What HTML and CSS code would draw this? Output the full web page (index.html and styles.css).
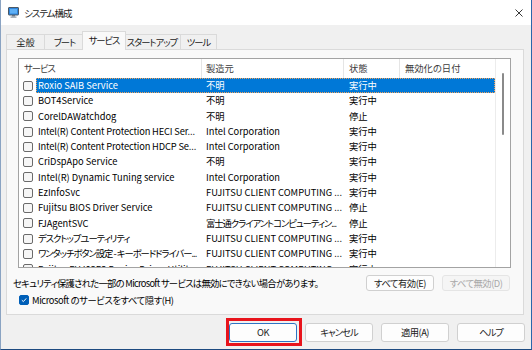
FILE: index.html
```html
<!DOCTYPE html>
<html lang="ja">
<head>
    <meta charset="UTF-8">
    <title>システム構成</title>
    <link rel="stylesheet" href="styles.css">
</head>
<body>
    <div class="window">
        <div class="titlebar">
            <svg class="title-icon" viewBox="0 0 11 11">
                <rect x="0.5" y="0.5" width="10" height="7.5" rx="0.5" fill="#2f86de" stroke="#4a5866"/>
                <rect x="2" y="2" width="7" height="4.5" fill="#5fb0f5"/>
                <rect x="4" y="8" width="3" height="1.5" fill="#6b7580"/>
                <rect x="2.5" y="9.5" width="6" height="1.2" fill="#8a949e"/>
            </svg>
            <span class="title kana">システム構成</span>
            <svg class="close" viewBox="0 0 8 8">
                <path d="M0.5 0.5 L7.5 7.5 M7.5 0.5 L0.5 7.5" stroke="#222" stroke-width="0.9" fill="none"/>
            </svg>
        </div>

        <div class="tabs">
            <div class="tab t-general">全般</div>
            <div class="tab t-boot kana">ブート</div>
            <div class="tab t-services kana active">サービス</div>
            <div class="tab t-startup kana">スタートアップ</div>
            <div class="tab t-tools kana last">ツール</div>
        </div>

        <div class="panel">
            <div class="list">
                <div class="table">
                    <div class="header">
                        <div class="hcol h-name kana">サービス</div>
                        <div class="hcol h-maker">製造元</div>
                        <div class="hcol h-state">状態</div>
                        <div class="hcol h-date">無効化の日付</div>
                    </div>

                    <div class="row selected">
                        <div class="c-check"><span class="box"></span></div>
                        <div class="cells">
                            <div class="c-name">Roxio SAIB Service</div>
                            <div class="c-maker">不明</div>
                            <div class="c-state">実行中</div>
                            <div class="c-date"></div>
                        </div>
                    </div>
                    <div class="row">
                        <div class="c-check"><span class="box"></span></div>
                        <div class="cells">
                            <div class="c-name">BOT4Service</div>
                            <div class="c-maker">不明</div>
                            <div class="c-state">実行中</div>
                            <div class="c-date"></div>
                        </div>
                    </div>
                    <div class="row">
                        <div class="c-check"><span class="box"></span></div>
                        <div class="cells">
                            <div class="c-name">CorelDAWatchdog</div>
                            <div class="c-maker">不明</div>
                            <div class="c-state">停止</div>
                            <div class="c-date"></div>
                        </div>
                    </div>
                    <div class="row">
                        <div class="c-check"><span class="box"></span></div>
                        <div class="cells">
                            <div class="c-name tight">Intel(R) Content Protection HECI Ser...</div>
                            <div class="c-maker">Intel Corporation</div>
                            <div class="c-state">実行中</div>
                            <div class="c-date"></div>
                        </div>
                    </div>
                    <div class="row">
                        <div class="c-check"><span class="box"></span></div>
                        <div class="cells">
                            <div class="c-name tight">Intel(R) Content Protection HDCP Se...</div>
                            <div class="c-maker">Intel Corporation</div>
                            <div class="c-state">実行中</div>
                            <div class="c-date"></div>
                        </div>
                    </div>
                    <div class="row">
                        <div class="c-check"><span class="box"></span></div>
                        <div class="cells">
                            <div class="c-name">CriDspApo Service</div>
                            <div class="c-maker">不明</div>
                            <div class="c-state">実行中</div>
                            <div class="c-date"></div>
                        </div>
                    </div>
                    <div class="row">
                        <div class="c-check"><span class="box"></span></div>
                        <div class="cells">
                            <div class="c-name">Intel(R) Dynamic Tuning service</div>
                            <div class="c-maker">Intel Corporation</div>
                            <div class="c-state">実行中</div>
                            <div class="c-date"></div>
                        </div>
                    </div>
                    <div class="row">
                        <div class="c-check"><span class="box"></span></div>
                        <div class="cells">
                            <div class="c-name">EzInfoSvc</div>
                            <div class="c-maker">FUJITSU CLIENT COMPUTING ...</div>
                            <div class="c-state">実行中</div>
                            <div class="c-date"></div>
                        </div>
                    </div>
                    <div class="row">
                        <div class="c-check"><span class="box"></span></div>
                        <div class="cells">
                            <div class="c-name">Fujitsu BIOS Driver Service</div>
                            <div class="c-maker">FUJITSU CLIENT COMPUTING ...</div>
                            <div class="c-state">停止</div>
                            <div class="c-date"></div>
                        </div>
                    </div>
                    <div class="row">
                        <div class="c-check"><span class="box"></span></div>
                        <div class="cells">
                            <div class="c-name">FJAgentSVC</div>
                            <div class="c-maker kana">富士通クライアントコンピューティン...</div>
                            <div class="c-state">停止</div>
                            <div class="c-date"></div>
                        </div>
                    </div>
                    <div class="row">
                        <div class="c-check"><span class="box"></span></div>
                        <div class="cells">
                            <div class="c-name kana">デスクトップユーティリティ</div>
                            <div class="c-maker">FUJITSU CLIENT COMPUTING ...</div>
                            <div class="c-state">実行中</div>
                            <div class="c-date"></div>
                        </div>
                    </div>
                    <div class="row">
                        <div class="c-check"><span class="box"></span></div>
                        <div class="cells">
                            <div class="c-name kana">ワンタッチボタン設定 - キーボードドライバー...</div>
                            <div class="c-maker">FUJITSU CLIENT COMPUTING ...</div>
                            <div class="c-state">実行中</div>
                            <div class="c-date"></div>
                        </div>
                    </div>
                    <div class="row">
                        <div class="c-check"><span class="box"></span></div>
                        <div class="cells">
                            <div class="c-name">Fujitsu FUJ02E3 Device Driver Utility</div>
                            <div class="c-maker">FUJITSU CLIENT COMPUTING ...</div>
                            <div class="c-state">実行中</div>
                            <div class="c-date"></div>
                        </div>
                    </div>
                </div>
                <div class="vscroll">
                    <div class="thumb"></div>
                </div>
            </div>

            <div class="note">
                <span class="mixed">セキュリティ保護された一部の Microsoft サービスは無効にできない場合があります。</span>
                <div class="note-buttons">
                    <button class="btn">すべて有効(E)</button>
                    <button class="btn" disabled>すべて無効(D)</button>
                </div>
            </div>

            <label class="hide-ms">
                <span class="box checked">
                    <svg viewBox="0 0 10 10"><path d="M2.3 5.2 L4.2 7 L7.8 3" stroke="#fff" stroke-width="1.2" fill="none"/></svg>
                </span>
                <span class="mixed-light">Microsoft のサービスをすべて隠す(H)</span>
            </label>
        </div>

        <div class="footer">
            <div class="ok-wrap">
                <button class="btn big default">OK</button>
                <span class="mark"></span>
            </div>
            <button class="btn big kana">キャンセル</button>
            <button class="btn big">適用(A)</button>
            <button class="btn big kana">ヘルプ</button>
        </div>
    </div>
</body>
</html>
```

FILE: styles.css
```css
* {
    box-sizing: border-box;
}

html, body {
    margin: 0;
    padding: 0;
}

body {
    width: 532px;
    height: 350px;
    overflow: hidden;
    background-color: #f0f0f0;
    font-family: "Noto Sans CJK JP", sans-serif;
    font-size: 9.3px;
    font-feature-settings: "palt";
    color: #000;
}

/* kana in Noto run wider than in the Windows UI font */
.kana {
    letter-spacing: -1px;
}

.mixed {
    letter-spacing: -0.7px;
}

.mixed-light {
    letter-spacing: -0.4px;
}

.tight {
    letter-spacing: -0.15px;
}

.window {
    width: 532px;
    height: 350px;
    background-color: #f0f0f0;
    border-left: 1px solid #8aa3c2;
    border-right: 1px solid #2b67ab;
    border-bottom: 1px solid #1d4a80;
    display: flex;
    flex-direction: column;
}

/* title bar */
.titlebar {
    height: 25px;
    flex-shrink: 0;
    background-color: #fff;
    display: flex;
    align-items: center;
    padding-left: 7px;
}

.title-icon {
    width: 11px;
    height: 11px;
    margin-right: 5px;
}

.title {
    flex: 1;
    font-size: 9.5px;
    color: #1a1a1a;
}

.close {
    width: 8px;
    height: 8px;
    margin-right: 8px;
}

/* tabs */
.tabs {
    height: 24px;
    flex-shrink: 0;
    display: flex;
    align-items: flex-end;
    padding-left: 5px;
}

.tab {
    flex-shrink: 0;
    height: 15px;
    line-height: 14px;
    text-align: center;
    border-top: 1px solid #dadada;
    border-left: 1px solid #dadada;
    background-color: #f0f0f0;
    color: #1a1a1a;
}

.t-general {
    width: 38px;
}

.t-boot {
    width: 40px;
}

.t-services {
    width: 44px;
}

.t-startup {
    width: 56px;
}

.t-tools {
    width: 37px;
}

.tab.last {
    border-right: 1px solid #dadada;
}

.tab.active {
    position: relative;
    z-index: 1;
    height: 19px;
    margin: 0 -2px -1px -2px;
    line-height: 16px;
    background-color: #f9f9f9;
    border-right: 1px solid #dadada;
}

.tab.active + .tab {
    border-left: none;
}

/* panel */
.panel {
    height: 266px;
    flex-shrink: 0;
    margin: 0 7px 0 5px;
    padding: 8px 12px 0 6px;
    background-color: #f9f9f9;
    border: 1px solid #dadada;
}

.list {
    margin-left: 5px;
    height: 210px;
    background-color: #fff;
    border: 1px solid #a3a3a3;
    display: flex;
    overflow: hidden;
}

.table {
    width: 476px;
    overflow: hidden;
}

.header {
    display: flex;
    height: 19px;
    color: #3c3c3c;
}

.hcol {
    line-height: 19px;
    border-left: 1px solid #e5e5e5;
    padding-left: 4px;
    white-space: nowrap;
}

.h-name {
    width: 182px;
    border-left: none;
    padding-left: 5px;
}

.h-maker {
    width: 142px;
}

.h-state {
    width: 56px;
    padding-left: 5px;
}

.h-date {
    width: 96px;
    padding-left: 5px;
}

.row {
    display: flex;
    height: 15.3px;
    line-height: 15.3px;
}

.c-check {
    width: 17px;
    flex-shrink: 0;
    display: flex;
    align-items: center;
    padding-left: 4px;
}

.cells {
    display: flex;
    width: 459px;
}

.cells > div {
    flex-shrink: 0;
    white-space: nowrap;
    overflow: hidden;
    text-overflow: ellipsis;
}

.c-name {
    width: 165px;
    padding-left: 2px;
}

.c-maker {
    width: 142px;
    padding-left: 5px;
}

.c-state {
    width: 56px;
    padding-left: 6px;
}

.c-date {
    width: 96px;
}

.row.selected .cells {
    background-color: #0078d7;
    color: #fff;
    outline: 1px dotted #f2a25a;
    outline-offset: -1px;
}

.box {
    display: inline-block;
    flex-shrink: 0;
    width: 10px;
    height: 10px;
    border: 1px solid #6b6b6b;
    border-radius: 2px;
    background-color: #f6f6f6;
}

.box.checked {
    background-color: #005fb8;
    border-color: #005fb8;
}

.box svg {
    display: block;
    width: 8px;
    height: 8px;
}

.vscroll {
    width: 15px;
    border-left: 1px solid #ececec;
    background-color: #fff;
}

.thumb {
    width: 2px;
    height: 62px;
    margin: 14px 0 0 6px;
    border-radius: 1px;
    background-color: #8a8a8a;
}

/* under the list */
.note {
    display: flex;
    align-items: center;
    height: 16px;
    margin-top: 7px;
    white-space: nowrap;
}

.note-buttons {
    display: flex;
    gap: 8px;
    margin-left: auto;
    margin-right: 1px;
}

.btn {
    width: 68px;
    height: 16px;
    padding: 0;
    font: inherit;
    font-feature-settings: "palt";
    line-height: 14px;
    letter-spacing: -0.5px;
    color: #1a1a1a;
    text-align: center;
    background-color: #fdfdfd;
    border: 1px solid #d0d0d0;
    border-radius: 3px;
}

.btn:disabled {
    color: #a8a8a8;
    background-color: #f5f5f5;
    border-color: #e5e5e5;
}

.hide-ms {
    display: flex;
    align-items: center;
    gap: 3px;
    height: 10px;
    margin: 4px 0 0 6px;
    white-space: nowrap;
}

/* footer buttons */
.footer {
    flex: 1;
    display: flex;
    justify-content: flex-end;
    gap: 8px;
    padding: 8px 6px 0 0;
}

.btn.big {
    height: 19px;
    line-height: 17px;
}

.btn.kana {
    letter-spacing: -1px;
}

.btn.default {
    border-color: #2d74c4;
}

.ok-wrap {
    position: relative;
    height: 19px;
}

.ok-wrap .btn {
    display: block;
}

.mark {
    position: absolute;
    top: -5px;
    left: -3px;
    right: -5px;
    bottom: -4px;
    border: 3px solid #e8141c;
}
```
